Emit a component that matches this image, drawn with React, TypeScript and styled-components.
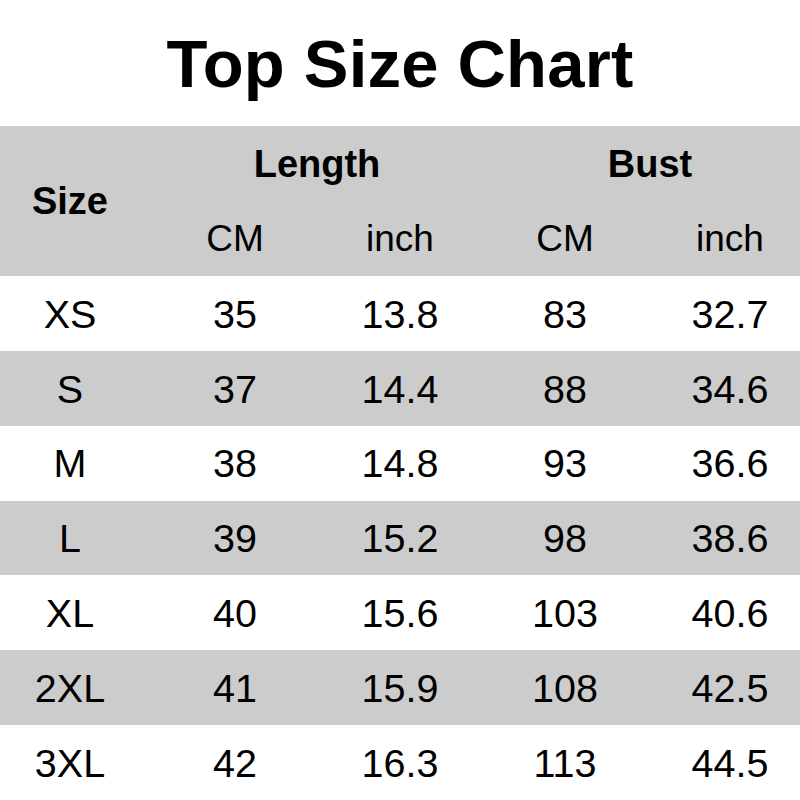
import React from "react";
import styled, { createGlobalStyle } from "styled-components";

const Global = createGlobalStyle`
  html, body { margin: 0; padding: 0; background: #fff; }
  body { font-family: "Liberation Sans", Arial, sans-serif; color: #000; }
`;

const Page = styled.div`
  width: 800px;
  height: 800px;
  display: flex;
  flex-direction: column;
  background: #fff;
`;

const TitleBar = styled.div`
  height: 126px;
  display: flex;
  align-items: center;
  justify-content: center;
`;

const Title = styled.h1`
  margin: 0;
  font-size: 67px;
  line-height: 1;
  font-weight: 700;
  letter-spacing: 0.2px;
`;

const COLS = "140px 190px 140px 190px 140px";

const Header = styled.div`
  display: grid;
  grid-template-columns: ${COLS};
  grid-template-rows: 75px 75px;
  background: #cccccc;
`;

const HeadCell = styled.div<{ $span?: number; $rows?: number; $bold?: boolean; $shift?: number }>`
  display: flex;
  align-items: center;
  justify-content: center;
  font-size: ${(p) => (p.$bold ? "38px" : "37px")};
  font-weight: ${(p) => (p.$bold ? 700 : 400)};
  line-height: 1;
  padding-left: ${(p) => p.$shift ?? 0}px;
  ${(p) => (p.$span ? `grid-column: span ${p.$span};` : "")}
  ${(p) => (p.$rows ? `grid-row: span ${p.$rows};` : "")}
`;

const Body = styled.div`
  flex: 1;
  display: flex;
  flex-direction: column;
`;

const Row = styled.div<{ $shade: boolean }>`
  flex: 1;
  display: grid;
  grid-template-columns: ${COLS};
  background: ${(p) => (p.$shade ? "#cccccc" : "#ffffff")};
`;

const Cell = styled.div`
  display: flex;
  align-items: center;
  justify-content: center;
  font-size: 39.5px;
  line-height: 1;
  padding-top: 2px;
`;

const data: string[][] = [
  ["XS", "35", "13.8", "83", "32.7"],
  ["S", "37", "14.4", "88", "34.6"],
  ["M", "38", "14.8", "93", "36.6"],
  ["L", "39", "15.2", "98", "38.6"],
  ["XL", "40", "15.6", "103", "40.6"],
  ["2XL", "41", "15.9", "108", "42.5"],
  ["3XL", "42", "16.3", "113", "44.5"],
];

export default function App() {
  return (
    <Page>
      <Global />
      <TitleBar>
        <Title>Top Size Chart</Title>
      </TitleBar>
      <Header>
        <HeadCell $bold $rows={2}>Size</HeadCell>
        <HeadCell $bold $span={2} $shift={24}>Length</HeadCell>
        <HeadCell $bold $span={2} $shift={30}>Bust</HeadCell>
        <HeadCell>CM</HeadCell>
        <HeadCell>inch</HeadCell>
        <HeadCell>CM</HeadCell>
        <HeadCell>inch</HeadCell>
      </Header>
      <Body>
        {data.map((r, i) => (
          <Row key={r[0]} $shade={i % 2 === 1}>
            {r.map((v, j) => (
              <Cell key={j}>{v}</Cell>
            ))}
          </Row>
        ))}
      </Body>
    </Page>
  );
}
